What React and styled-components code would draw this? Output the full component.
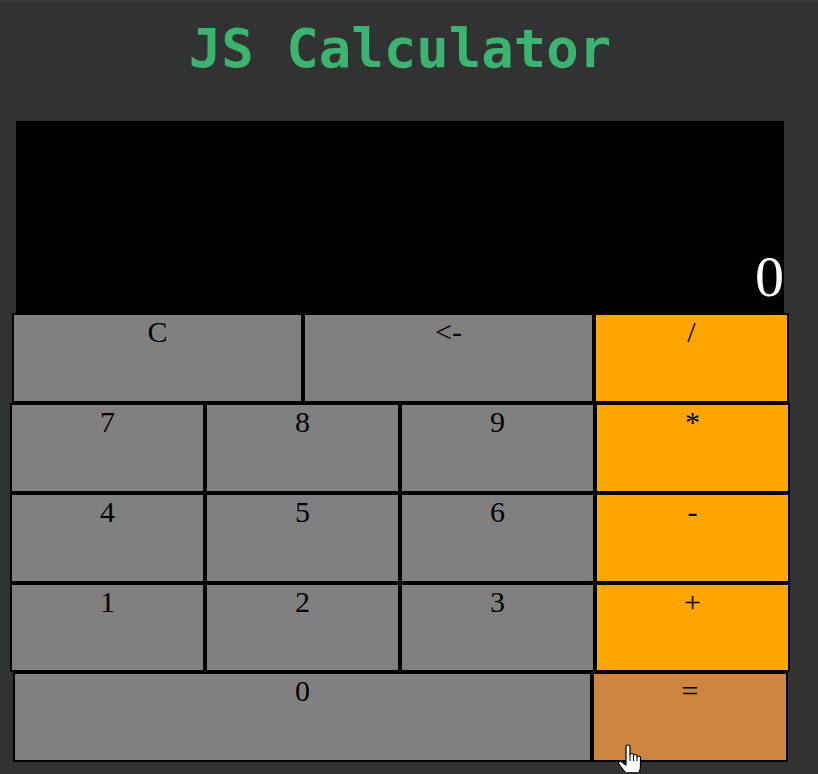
import React from "react";
import styled, { createGlobalStyle, css } from "styled-components";

const GlobalStyle = createGlobalStyle`
  html, body {
    margin: 0;
    padding: 0;
    background: #313332;
  }
  body {
    border-top: 2px solid #3b3c3c;
    min-height: 772px;
  }
  * { box-sizing: border-box; }
`;

const Page = styled.div`
  position: relative;
  width: 800px;
  display: flex;
  flex-direction: column;
  align-items: center;
`;

const Title = styled.h1`
  margin: 0;
  padding-top: 15px;
  font-family: "DejaVu Sans Mono", monospace;
  font-weight: 700;
  font-size: 54px;
  line-height: 63px;
  color: #3cb371;
  text-align: center;
`;

const Calculator = styled.div`
  margin-top: 41px;
  display: flex;
  flex-direction: column;
  align-items: center;
`;

const Display = styled.div`
  width: 768px;
  height: 192px;
  padding-bottom: 2px;
  background: #000;
  color: #fff;
  font-family: "Liberation Serif", "Times New Roman", serif;
  font-size: 58px;
  line-height: 1.15;
  display: flex;
  justify-content: flex-end;
  align-items: flex-end;
`;

const Row = styled.div`
  display: flex;
  height: ${(p) => p.$h || 90}px;
  margin-left: ${(p) => p.$shift || 0}px;
`;

const variants = {
  num: css`background: #808080;`,
  op: css`background: #ffa500;`,
  eq: css`background: #cd853f;`,
};

const Key = styled.div`
  width: ${(p) => p.$w}px;
  height: 100%;
  border: 2px solid #000;
  font-family: "Liberation Serif", "Times New Roman", serif;
  font-size: 30px;
  line-height: 1.1;
  color: #000;
  text-align: center;
  ${(p) => variants[p.$kind || "num"]}
`;

const Cursor = styled.svg`
  position: absolute;
  left: 618px;
  top: 742px;
  width: 26px;
  height: 32px;
  pointer-events: none;
`;

const rows = [
  { shift: 1, h: 90, keys: [["C", 291], ["<-", 291], ["/", 195, "op"]] },
  { shift: 0, h: 90, keys: [["7", 195], ["8", 195], ["9", 195], ["*", 195, "op"]] },
  { shift: 0, h: 90, keys: [["4", 195], ["5", 195], ["6", 195], ["-", 195, "op"]] },
  { shift: 0, h: 89, keys: [["1", 195], ["2", 195], ["3", 195], ["+", 195, "op"]] },
  { shift: 1, h: 90, keys: [["0", 579], ["=", 196, "eq"]] },
];

export default function App() {
  return (
    <>
      <GlobalStyle />
      <Page>
        <Title>JS Calculator</Title>
        <Calculator>
          <Display>0</Display>
          {rows.map((r, i) => (
            <Row key={i} $shift={r.shift} $h={r.h}>
              {r.keys.map(([label, w, kind]) => (
                <Key key={label} $w={w} $kind={kind}>
                  {label}
                </Key>
              ))}
            </Row>
          ))}
        </Calculator>
        <Cursor viewBox="0 0 26 32">
          <path
            d="M8,14 L8,3 Q8,1 10,1 Q12,1 12,3 L12,11 Q12,9.5 13.75,9.5 Q15.5,9.5 15.5,11 L15.5,12 Q15.5,10.5 17.25,10.5 Q19,10.5 19,12 L19,13.5 Q19,12 20.75,12 Q22.5,12 22.5,14 L22.5,22 Q22.5,27 20,30 L9,30 Q6,27 3,23 L1,20 Q0,18 1.5,17.5 Q3,17 5,19 L8,21 Z"
            fill="#fff"
            stroke="#000"
            strokeWidth="1.2"
            strokeLinejoin="round"
          />
          <path d="M12,11 L12,17 M15.5,12 L15.5,17 M19,13.5 L19,17" stroke="#000" strokeWidth="1" />
        </Cursor>
      </Page>
    </>
  );
}
